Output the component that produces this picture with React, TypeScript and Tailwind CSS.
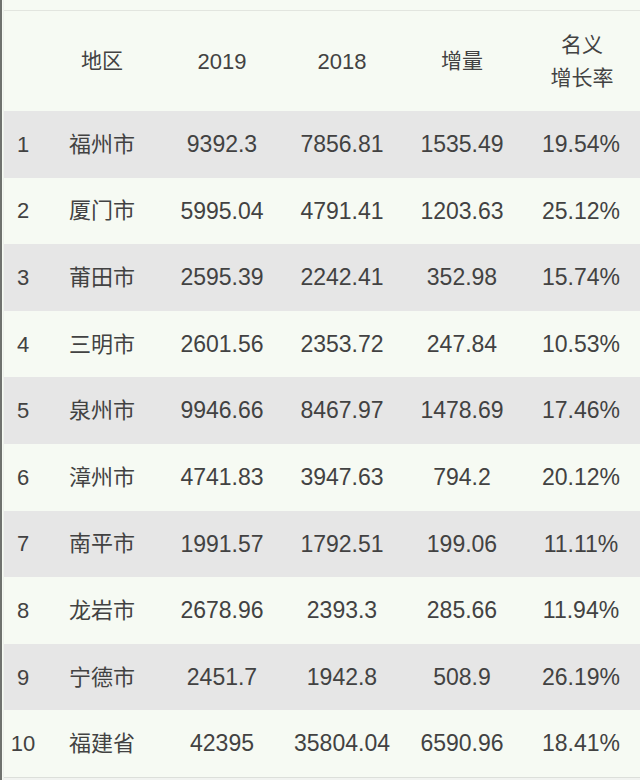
import React from "react";

const rows: [string, string, string, string, string, string][] = [
  ["1", "福州市", "9392.3", "7856.81", "1535.49", "19.54%"],
  ["2", "厦门市", "5995.04", "4791.41", "1203.63", "25.12%"],
  ["3", "莆田市", "2595.39", "2242.41", "352.98", "15.74%"],
  ["4", "三明市", "2601.56", "2353.72", "247.84", "10.53%"],
  ["5", "泉州市", "9946.66", "8467.97", "1478.69", "17.46%"],
  ["6", "漳州市", "4741.83", "3947.63", "794.2", "20.12%"],
  ["7", "南平市", "1991.57", "1792.51", "199.06", "11.11%"],
  ["8", "龙岩市", "2678.96", "2393.3", "285.66", "11.94%"],
  ["9", "宁德市", "2451.7", "1942.8", "508.9", "26.19%"],
  ["10", "福建省", "42395", "35804.04", "6590.96", "18.41%"],
];

const font = {
  fontFamily: '"Liberation Sans", "Noto Sans CJK SC", sans-serif',
};

export default function App() {
  return (
    <div
      className="w-[640px] h-[780px] bg-[#f6faf3] flex overflow-hidden text-[#424242]"
      style={font}
    >
      <div className="w-[2px] shrink-0 bg-[#6f726e]" />
      <div className="w-[2px] shrink-0 border-r border-[#eef1ec]" />
      <div className="flex-1 flex flex-col">
        <div className="h-[10px] shrink-0" />
        <div className="h-[1px] shrink-0 bg-[#e2e5df]" />
        <div className="grid grid-cols-[38px_120px_120px_120px_120px_1fr] h-[100px] shrink-0 items-center text-[21px] text-center">
          <div />
          <div>地区</div>
          <div className="text-[22px]">2019</div>
          <div className="text-[22px]">2018</div>
          <div>增量</div>
          <div className="leading-[33px] pl-[2px]">
            名义
            <br />
            增长率
          </div>
        </div>
        {rows.map((r, i) => (
          <div
            key={r[0]}
            className={`grid grid-cols-[38px_120px_120px_120px_120px_1fr] h-[66.6px] shrink-0 items-center text-[23px] text-center ${
              i % 2 === 0 ? "bg-[#e6e6e6]" : "bg-[#f6faf3]"
            }`}
          >
            <div className="text-[22px]">{r[0]}</div>
            <div className="text-[22px]">{r[1]}</div>
            <div>{r[2]}</div>
            <div>{r[3]}</div>
            <div>{r[4]}</div>
            <div>{r[5]}</div>
          </div>
        ))}
        <div className="h-[1px] shrink-0 bg-[#dcdfda]" />
        <div className="flex-1 bg-[#f1f3f0]" />
      </div>
    </div>
  );
}
